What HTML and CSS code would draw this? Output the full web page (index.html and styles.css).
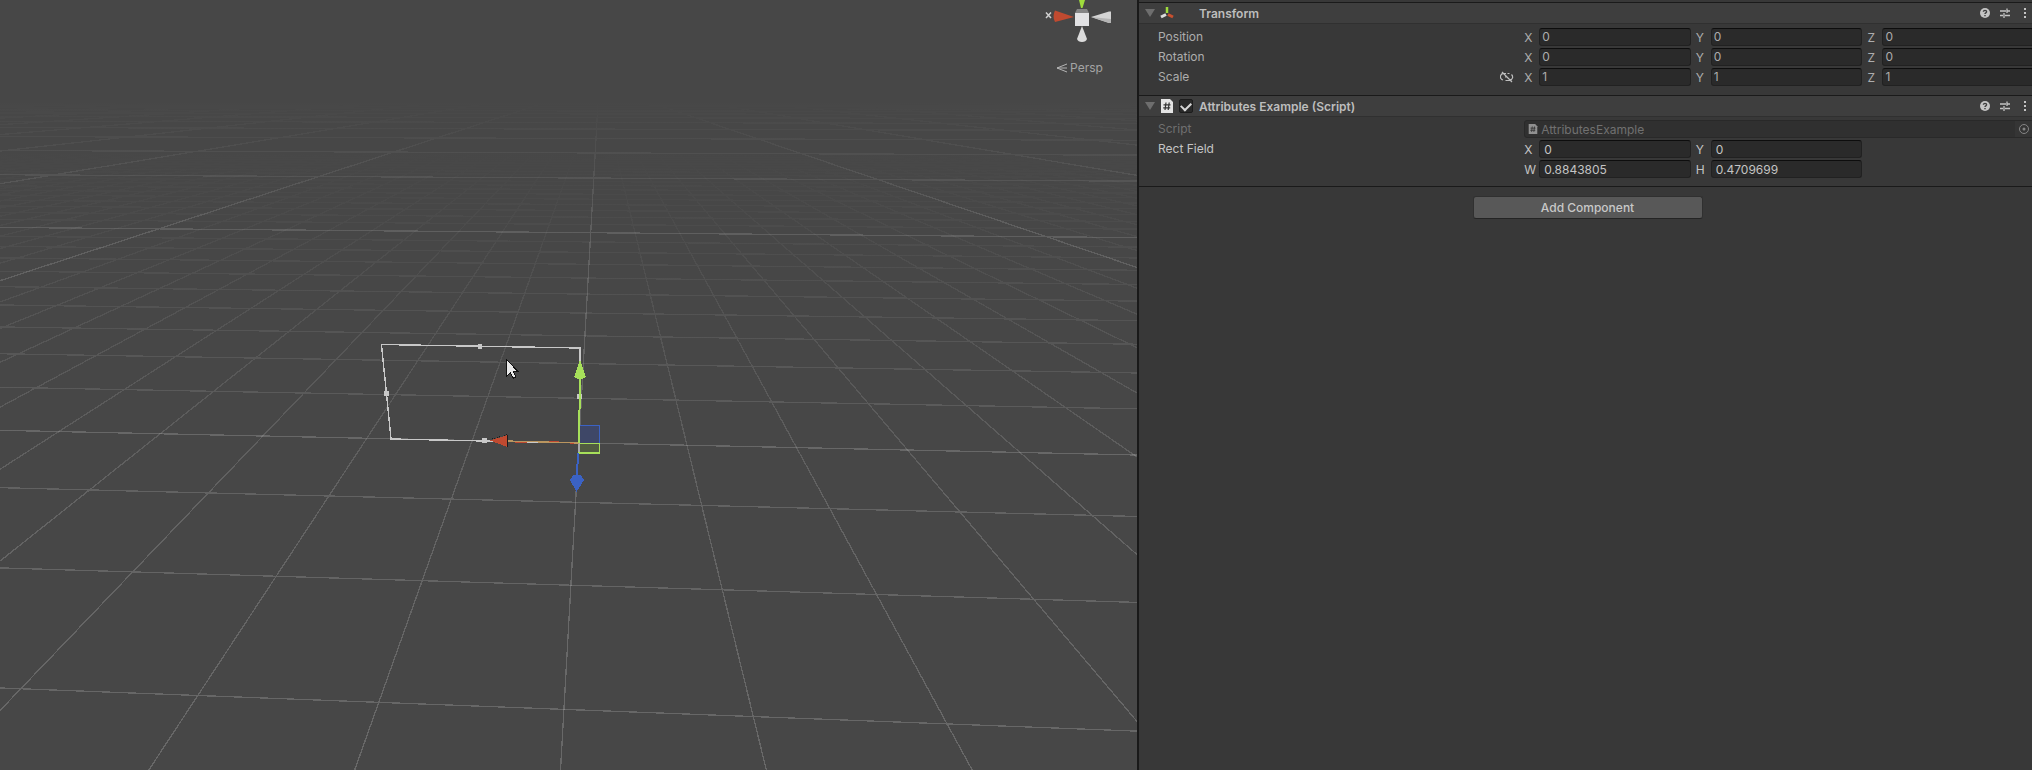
FILE: index.html
```
<!DOCTYPE html>
<html lang="en">
<head>
  <meta charset="UTF-8" />
  <meta name="viewport" content="width=device-width, initial-scale=1.0"/>
  <title>Scene</title>
  <link rel="stylesheet" href="styles.css">
</head>
<body>
  <svg class="symbols" aria-hidden="true">
    <symbol id="help" viewBox="0 0 12 12">
      <circle cx="6" cy="6" r="5" fill="#c4c4c4"/>
      <path d="M4.4 4.8c0-1.9 3.2-1.9 3.2 0 0 1.1-1.6 1-1.6 2.2M6 8v1.2" fill="none" stroke="#3e3e3e" stroke-width="1.4"/>
    </symbol>
    <symbol id="presets" viewBox="0 0 12 12">
      <path d="M1 4h6M8 4h3M1 8.500h3M6 8.500h5M8 1.500v4.500M5 6v5" fill="none" stroke="#c4c4c4" stroke-width="1.300"/>
    </symbol>
    <symbol id="dots" viewBox="0 0 12 12">
      <path d="M5 1h2v2H5zM5 5h2v2H5zM5 9h2v2H5z" fill="#c4c4c4"/>
    </symbol>
    <symbol id="script" viewBox="0 0 14 14">
      <path d="M1 0h9l3 3v11H1z" fill="currentColor"/>
      <path d="M6 3.500l-1 7.500M9.200 3.500l-1 7.500M3.500 5.800h7M3.200 8.800h7" fill="none" stroke="#333" stroke-width="1.200"/>
    </symbol>
  </svg>

  <main class="editor">
    <section class="scene" aria-label="Scene view">
      <svg class="viewport" viewBox="0 0 1137 770" preserveAspectRatio="xMidYMid slice">
        <defs>
          <linearGradient id="minorFade" gradientUnits="userSpaceOnUse" x1="0" y1="0" x2="0" y2="770">
            <stop offset="0.19" stop-color="#fff" stop-opacity="0"/>
            <stop offset="0.30" stop-color="#fff" stop-opacity="0.03"/>
            <stop offset="0.44" stop-color="#fff" stop-opacity="0.08"/>
            <stop offset="0.65" stop-color="#fff" stop-opacity="0.15"/>
            <stop offset="1" stop-color="#fff" stop-opacity="0.18"/>
          </linearGradient>
          <linearGradient id="majorFade" gradientUnits="userSpaceOnUse" x1="0" y1="0" x2="0" y2="770">
            <stop offset="0.13" stop-color="#fff" stop-opacity="0"/>
            <stop offset="0.20" stop-color="#fff" stop-opacity="0.05"/>
            <stop offset="0.30" stop-color="#fff" stop-opacity="0.13"/>
            <stop offset="0.60" stop-color="#fff" stop-opacity="0.18"/>
            <stop offset="1" stop-color="#fff" stop-opacity="0.18"/>
          </linearGradient>
        </defs>
        <path class="grid-minor" id="gridMinor"/>
        <path class="grid-major" id="gridMajor"/>

        <!-- rect handle -->
        <path class="rect-outline" d="M381.500 344.500L580 348L579 443L391 439Z"/>
        <path class="rect-dots" d="M478 344h4v5h-4zM384 391h5v5h-5zM482 438h5v5h-5zM577 394h5v5h-5z"/>

        <!-- move gizmo -->
        <path d="M579.500 425.500h20v18h-20z" fill="#3e4767" stroke="#3b62c4"/>
        <path d="M579 443.500h20.500v9.500H579z" fill="#515c41" stroke="#a7e05a" stroke-width="1.500"/>
        <path d="M579 443v9" stroke="#a8a8a8" stroke-width="1.500"/>
        <path d="M507 441h5M515 442.500h12M545 441.500h14M570 443.500h9" stroke="#c04a30"/>
        <path d="M579 443L507 441" stroke="#b9955f" stroke-width="1.300"/>
        <path d="M490 440.500L507.500 435v12z" fill="#c04a30"/>
        <path d="M507.500 435v12" stroke="#1c1c1c"/>
        <path d="M492 439L507 434.500" stroke="#1c1c1c" stroke-dasharray="1 1.500"/>
        <path d="M579 443L580 378" stroke="#a7e05a" stroke-width="2"/>
        <path d="M580 360L586 377L583 378.500H577L574 377Z" fill="#a7e05a"/>
        <path d="M578 453L577 476" stroke="#3b62c4" stroke-width="2"/>
        <path d="M570 480L573 475.500L577 474.500L581 475.500L584 480L576.500 492Z" fill="#3b62c4"/>

        <!-- pointer -->
        <path d="M506.500 359.500v17l3.800-3.500 2.700 5.200 3-1.300-2.500-5.100h4.800z" fill="#e8e8e8" stroke="#111"/>
      </svg>

      <div class="orientation">
        <svg width="110" height="46" viewBox="1027 0 110 46">
          <path d="M1079 0h6l-2.500 8h-1.500z" fill="#9fdc3c"/>
          <path d="M1046 12.500l5 5.500M1051 12.500l-5 5.500" stroke="#d0d0d0" stroke-width="1.500"/>
          <path d="M1074 17L1055 10.500q-3 6 0 11.500z" fill="#c04a30"/>
          <path d="M1091 17L1109 11.500h2v11.500h-2z" fill="#d4d4d4"/>
          <path d="M1091 17L1111 19v4h-2z" fill="#b4b4b4"/>
          <path d="M1075 13l2-4h10l2 4z" fill="#858585"/>
          <path d="M1075 13h14v13h-14z" fill="#e2e2e4"/>
          <path d="M1082 26L1087 39q-1 3-5 3t-5-3z" fill="#dcdcdc"/>
        </svg>
        <button class="persp" type="button">
          <svg width="11" height="10" viewBox="0 0 11 10"><path d="M11 1L1 5l10 4M1 5h10" fill="none" stroke="#b4b4b4"/></svg>
          Persp
        </button>
      </div>
    </section>

    <aside class="inspector" aria-label="Inspector">
      <div class="components">
        <section class="component">
          <header class="component-header">
            <span class="foldout"></span>
            <svg class="icon" viewBox="0 0 14 14">
              <path d="M7 1v6" stroke="#9fdc3c" stroke-width="2.500"/>
              <path d="M6 8.500L1 11" stroke="#dcdcdc" stroke-width="3"/>
              <path d="M8 8.500L13 11" stroke="#c8502f" stroke-width="3"/>
            </svg>
            <span class="toggle-space"></span>
            <h2>Transform</h2>
            <button type="button" aria-label="Help"><svg><use href="#help"/></svg></button>
            <button type="button" aria-label="Presets"><svg><use href="#presets"/></svg></button>
            <button type="button" aria-label="More"><svg><use href="#dots"/></svg></button>
          </header>
          <div class="fields">
            <div class="row">
              <span class="name">Position</span>
              <div class="values">
                <label>X<input type="text" value="0"></label>
                <label>Y<input type="text" value="0"></label>
                <label>Z<input type="text" value="0"></label>
              </div>
            </div>
            <div class="row">
              <span class="name">Rotation</span>
              <div class="values">
                <label>X<input type="text" value="0"></label>
                <label>Y<input type="text" value="0"></label>
                <label>Z<input type="text" value="0"></label>
              </div>
            </div>
            <div class="row">
              <span class="name">Scale
                <svg class="link" viewBox="0 0 14 12">
                  <path d="M6 2.500H4.500a3 3 0 0 0-1.500 6.500M5.500 9.500h4a3.500 3.500 0 0 0 2-6M7.500 2.500h2M5 6h2M2 1l10 10" fill="none" stroke="#bdbdbd" stroke-width="1.200"/>
                </svg>
              </span>
              <div class="values">
                <label>X<input type="text" value="1"></label>
                <label>Y<input type="text" value="1"></label>
                <label>Z<input type="text" value="1"></label>
              </div>
            </div>
          </div>
        </section>

        <section class="component">
          <header class="component-header">
            <span class="foldout"></span>
            <svg class="icon script-icon"><use href="#script"/></svg>
            <input type="checkbox" aria-label="Enabled" checked>
            <h2>Attributes Example (Script)</h2>
            <button type="button" aria-label="Help"><svg><use href="#help"/></svg></button>
            <button type="button" aria-label="Presets"><svg><use href="#presets"/></svg></button>
            <button type="button" aria-label="More"><svg><use href="#dots"/></svg></button>
          </header>
          <div class="fields script-fields">
            <div class="row disabled">
              <label class="name" for="script-ref">Script</label>
              <div class="object-field">
                <svg class="object-icon"><use href="#script"/></svg>
                <input type="text" id="script-ref" value="AttributesExample" disabled>
                <svg class="picker" viewBox="0 0 18 16">
                  <circle cx="9" cy="8" r="4.500" fill="none" stroke="#858585"/>
                  <circle cx="9" cy="8" r="1.500" fill="#858585"/>
                </svg>
              </div>
            </div>
            <div class="row rect">
              <span class="name">Rect Field</span>
              <div class="values">
                <label>X<input type="text" value="0"></label>
                <label>Y<input type="text" value="0"></label>
              </div>
            </div>
            <div class="row rect">
              <span class="name"></span>
              <div class="values">
                <label>W<input type="text" value="0.8843805"></label>
                <label>H<input type="text" value="0.4709699"></label>
              </div>
            </div>
          </div>
        </section>

        <button class="add-component" type="button">Add Component</button>
      </div>
    </aside>
  </main>

  <script src="grid.js"></script>
</body>
</html>
```

FILE: styles.css
```
* {
  margin: 0;
  padding: 0;
  box-sizing: border-box;
}

body {
  height: 100vh;
  overflow: hidden;
  background: #383838;
  font-family: Inter, "Liberation Sans", sans-serif;
  font-size: 12px;
  color: #adadad;
}

button,
input {
  font: inherit;
  color: inherit;
  border: none;
  background: none;
}

.symbols {
  display: none;
}

.editor {
  display: grid;
  grid-template-columns: 1fr 895px;
  height: 100%;
}

/* scene view */
.scene {
  position: relative;
  overflow: hidden;
  background: #474747;
}

.viewport {
  display: block;
  width: 100%;
  height: 100%;
  shape-rendering: crispEdges;
}

.grid-minor,
.grid-major {
  fill: none;
  stroke-width: 1.3;
}

.grid-minor {
  stroke: url(#minorFade);
}

.grid-major {
  stroke: url(#majorFade);
}

.rect-outline {
  fill: none;
  stroke: #c8c8c8;
  stroke-width: 1.4;
}

.rect-dots {
  fill: #c8c8c8;
}

.orientation {
  position: absolute;
  top: 0;
  right: 0;
  display: flex;
  flex-direction: column;
  align-items: center;
  gap: 13px;
}

.persp {
  display: flex;
  align-items: center;
  gap: 3px;
  padding-right: 5px;
  line-height: 18px;
  color: #a4a4a4;
}

/* inspector */
.inspector {
  overflow: hidden;
  border-left: 2px solid #191919;
}

/* the components run a little wider than the docked panel */
.components {
  display: flex;
  flex-direction: column;
  width: calc(100% + 4px);
  padding-top: 2px;
}

.component {
  border-top: 1px solid #1a1a1a;
}

.component-header {
  display: flex;
  align-items: center;
  height: 21px;
  padding: 0 5px 0 6px;
  background: #3e3e3e;
  border-bottom: 1px solid #303030;
}

.foldout {
  border: 5px solid transparent;
  border-top: 8px solid #6e6e6e;
  border-bottom: 0;
  margin-right: 5px;
}

.icon {
  width: 14px;
  height: 14px;
}

.script-icon {
  color: #e4e4e4;
}

.toggle-space,
.component-header input {
  width: 14px;
  height: 14px;
  margin: 0 6px 0 5px;
}

.component-header input {
  appearance: none;
  background: #2a2a2a;
  border: 1px solid #1c1c1c;
  border-radius: 2px;
  display: grid;
  place-items: center;
}

.component-header input:checked::before {
  content: "";
  width: 8px;
  height: 5px;
  border: solid #d8d8d8;
  border-width: 0 0 2px 2px;
  transform: translateY(-1px) rotate(-45deg);
}

h2 {
  flex: 1;
  font-size: 12px;
  font-weight: 600;
  color: #bdbdbd;
}

.component-header button {
  width: 12px;
  height: 12px;
  margin-left: 8px;
}

.component-header button svg {
  display: block;
  width: 12px;
  height: 12px;
}

.fields {
  display: flex;
  flex-direction: column;
  gap: 2px;
  padding: 4px 2px 9px 19px;
}

.script-fields {
  padding: 3px 2px 8px 19px;
  border-bottom: 1px solid #1a1a1a;
}

.row {
  display: grid;
  grid-template-columns: 5fr 7fr;
  column-gap: 2px;
  align-items: center;
  height: 18px;
}

.name {
  display: flex;
  align-items: center;
  justify-content: space-between;
  padding-bottom: 1px;
}

.link {
  width: 14px;
  height: 12px;
  margin-right: 8px;
}

.values {
  display: grid;
  grid-template-columns: repeat(3, 1fr);
  gap: 5px;
}

.values label {
  display: grid;
  grid-template-columns: 15px 1fr;
  align-items: center;
}

.values input {
  width: 100%;
  height: 18px;
  padding: 0 2px 1px;
  background: #2a2a2a;
  border: 1px solid #212121;
  border-top-color: #0d0d0d;
  border-radius: 3px;
}

.rect {
  color: #c4c4c4;
}

.rect .values input {
  padding: 0 4px;
}

.disabled {
  color: #707070;
}

.object-field {
  display: flex;
  align-items: center;
  height: 18px;
  padding-left: 3px;
  background: #303030;
  border: 1px solid #292929;
  border-radius: 3px;
}

.object-field input {
  flex: 1;
  min-width: 0;
  padding-left: 3px;
}

.object-icon {
  width: 10px;
  height: 10px;
  color: #909090;
}

.picker {
  width: 18px;
  height: 16px;
  background: #353535;
}

.add-component {
  align-self: center;
  width: 230px;
  height: 23px;
  margin-top: 9px;
  padding-bottom: 1px;
  background: #585858;
  border: 1px solid #303030;
  border-bottom-color: #242424;
  border-radius: 3px;
  font-weight: 500;
  color: #c8c8c8;
}
```

FILE: grid.js
```
// ground plane: columns run to the vanishing point, rows fan out from far left
const HORIZON = 85;
const VANISH_X = 599;

function column(u) {
  const slope = -0.0562 + 0.3005 * u;
  return `M${VANISH_X} ${HORIZON}L${VANISH_X + slope * 700} ${HORIZON + 700}`;
}

function row(v) {
  const depth = v + 7.02;
  const left = HORIZON + 2424 / depth;
  const right = HORIZON + 2597.4 / depth;
  return `M0 ${left}L1137 ${right}`;
}

let minor = '';
let major = '';

for (let u = -60; u <= 60; u++) {
  if (u % 10 !== 0) minor += column(u);
}

for (let v = -3; v <= 30; v++) {
  if (v % 10 !== 0) minor += row(v);
}

for (let n = -200; n <= 200; n += 10) {
  major += column(n);
  if (n >= 0) major += row(n);
}

document.getElementById('gridMinor').setAttribute('d', minor);
document.getElementById('gridMajor').setAttribute('d', major);
```
